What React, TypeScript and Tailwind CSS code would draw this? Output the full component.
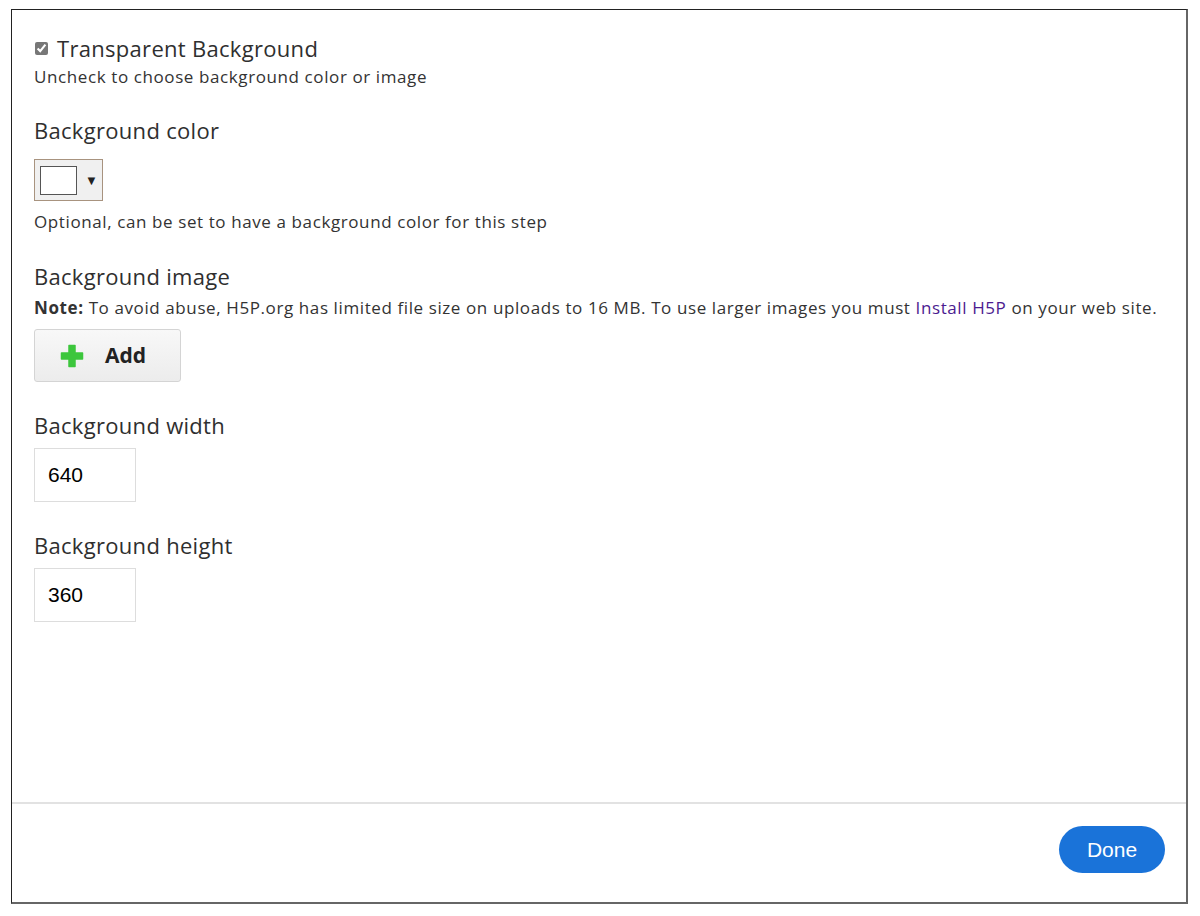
import React from "react";

export default function App() {
  const label = "text-[22px] leading-[30px] text-[#2f2f2f] font-normal tracking-[0.3px]";
  const desc = "text-[17px] leading-[24px] text-[#333] tracking-[0.6px]";
  return (
    <div className="w-[1200px] h-[916px] bg-white pt-[9px] pl-[11px]" style={{ fontFamily: '"Open Sans", sans-serif' }}>
      <div className="w-[1177px] h-[895px] border border-[#222] border-r-2 border-b-2 border-r-[#666] border-b-[#666] flex flex-col">
        <div className="flex-1 pl-[22px] pt-[23px]">
          <div className="flex items-center gap-[9px]">
            <input type="checkbox" defaultChecked className="w-[13px] h-[13px] m-0 ml-[1px] accent-[#777]" />
            <span className={label}>Transparent Background</span>
          </div>
          <div className={`${desc} mt-[2px]`}>Uncheck to choose background color or image</div>

          <div className={`${label} mt-[26px]`}>Background color</div>
          <div className="mt-[14px] w-[69px] h-[42px] bg-[#f0f0f0] border border-[#a8937f] flex items-center pl-[5px]">
            <div className="w-[37px] h-[29px] bg-white border border-[#555]"></div>
            <span className="ml-[8px] text-[13px] text-[#222] leading-none">▼</span>
          </div>
          <div className={`${desc} mt-[9px]`}>Optional, can be set to have a background color for this step</div>

          <div className={`${label} mt-[27px]`}>Background image</div>
          <div className={`${desc} mt-[5px]`}>
            <b className="font-bold">Note:</b> To avoid abuse, H5P.org has limited file size on uploads to 16 MB. To use larger images you must{" "}
            <span className="text-[#4b1b90]">Install H5P</span> on your web site.
          </div>
          <div className="mt-[9px] w-[147px] h-[53px] rounded-[3px] border border-[#d4d4d4] bg-gradient-to-b from-[#f8f8f8] to-[#ececec] flex items-center">
            <svg width="24" height="24" viewBox="0 0 24 24" className="ml-[25px]">
              <path d="M9 1.5h6v7.5h7.5v6H15v7.5H9V15H1.5V9H9z" fill="#3cc63c" strokeLinejoin="round" stroke="#3cc63c" strokeWidth="1.5" />
            </svg>
            <span className="ml-[21px] text-[21px] font-bold text-[#222]">Add</span>
          </div>

          <div className={`${label} mt-[28px]`}>Background width</div>
          <div className="mt-[8px] w-[102px] h-[54px] border border-[#ddd] flex items-center pl-[13px] text-[21px] text-black" style={{ fontFamily: '"Liberation Sans", Arial, sans-serif' }}>640</div>

          <div className={`${label} mt-[28px]`}>Background height</div>
          <div className="mt-[8px] w-[102px] h-[54px] border border-[#ddd] flex items-center pl-[13px] text-[21px] text-black" style={{ fontFamily: '"Liberation Sans", Arial, sans-serif' }}>360</div>
        </div>
        <div className="h-[2px] bg-[#e2e2e2]"></div>
        <div className="h-[98px] flex items-start justify-end pr-[21px] pt-[22px]">
          <div className="w-[106px] h-[47px] rounded-full bg-[#1a73d9] text-white text-[21px] flex items-center justify-center" style={{ fontFamily: '"Liberation Sans", Arial, sans-serif' }}>Done</div>
        </div>
      </div>
    </div>
  );
}
